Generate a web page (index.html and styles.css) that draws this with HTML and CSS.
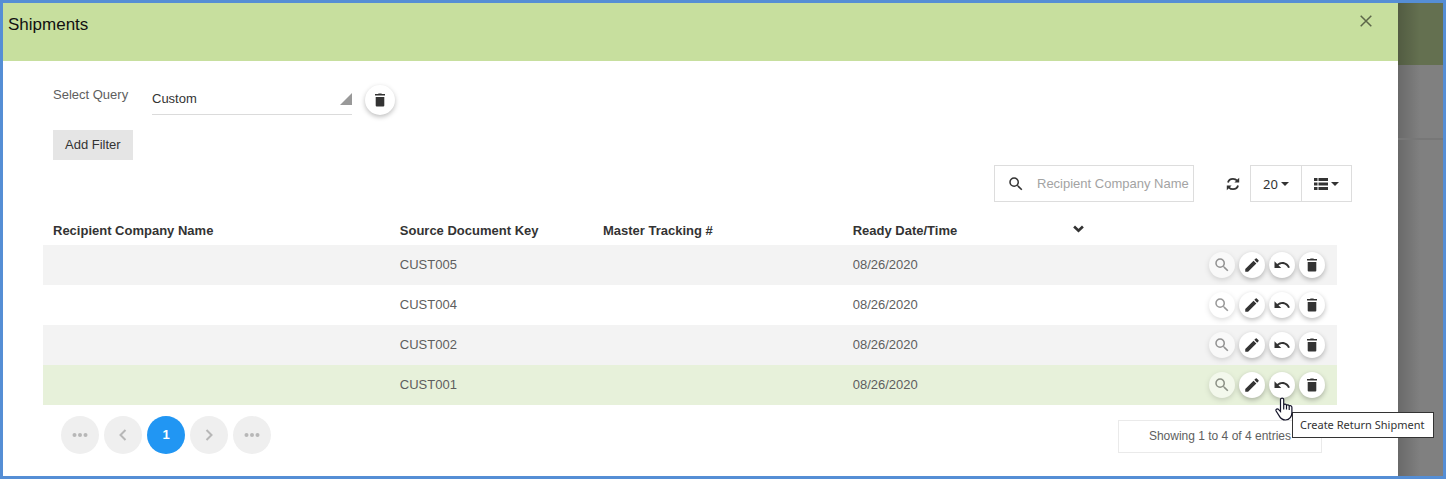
FILE: index.html
```html
<!DOCTYPE html>
<html lang="en">
<head>
<meta charset="utf-8">
<title>Shipments</title>
<link rel="stylesheet" href="styles.css">
</head>
<body>
<svg class="sprite" aria-hidden="true">
  <symbol id="trash" viewBox="0 0 18 18"><path d="M4.700 6h8.600v8.600a1 1 0 0 1-1 1H5.700a1 1 0 0 1-1-1zM7 3.100l.7-.7h2.600l.7.700h3v1.500H4V3.100z"/></symbol>
  <symbol id="search" viewBox="0 0 24 24"><path d="M15.500 14h-.79l-.28-.27A6.470 6.470 0 0 0 16 9.500 6.500 6.500 0 1 0 9.500 16c1.610 0 3.090-.59 4.230-1.570l.27.28v.79l5 4.990L20.490 19l-4.990-5zm-6 0C7.010 14 5 11.990 5 9.500S7.010 5 9.500 5 14 7.010 14 9.500 11.990 14 9.500 14z"/></symbol>
  <symbol id="edit" viewBox="0 0 24 24"><path d="M3 17.250V21h3.750L17.810 9.940l-3.750-3.750L3 17.250zM20.710 7.040a1 1 0 0 0 0-1.410l-2.340-2.340a1 1 0 0 0-1.410 0l-1.830 1.830 3.750 3.750 1.830-1.830z"/></symbol>
  <symbol id="undo" viewBox="0 0 24 24"><path d="M12.500 8c-2.650 0-5.050.99-6.900 2.600L2 7v9h9l-3.620-3.620c1.390-1.160 3.160-1.880 5.120-1.880 3.540 0 6.550 2.310 7.600 5.500l2.370-.78C21.080 11.030 17.150 8 12.500 8z"/></symbol>
</svg>
<div class="frame">
  <main class="panel">
    <header class="panel-head">
      <h1>Shipments</h1>
      <button class="close" type="button" aria-label="Close">
        <svg viewBox="0 0 12 12"><path d="M.7.7l10.600 10.600M11.300.7L.7 11.300"/></svg>
      </button>
    </header>
    <div class="panel-body">
      <div class="query">
        <label for="query">Select Query</label>
        <select id="query"><option>Custom</option></select>
        <button class="round large" type="button" aria-label="Delete query"><svg><use href="#trash"/></svg></button>
      </div>
      <button class="filter" type="button">Add Filter</button>
      <div class="toolbar">
        <div class="search">
          <svg><use href="#search"/></svg>
          <input type="text" aria-label="Search" placeholder="Recipient Company Name">
        </div>
        <button class="refresh" type="button" aria-label="Refresh">
          <svg viewBox="0 0 14 14"><path class="arc" d="M2 5.500C2.600 3 4.600 1.800 7 1.800c1.800 0 3 .6 4.200 1.900M12 8.500c-.6 2.500-2.600 3.700-5 3.700-1.800 0-3-.6-4.200-1.900"/><path d="M13.200.8v4.800H8.400zM.8 13.200V8.400h4.800z"/></svg>
        </button>
        <div class="group">
          <button class="size" type="button">20<span class="caret"></span></button>
          <button type="button" aria-label="Columns">
            <svg viewBox="0 0 14 12"><path d="M0 0h3.500v3H0zM4.500 0H14v3H4.500zM0 4.500h3.500v3H0zM4.500 4.500H14v3H4.500zM0 9h3.500v3H0zM4.500 9H14v3H4.500z"/></svg><span class="caret"></span>
          </button>
        </div>
      </div>
      <table>
        <colgroup><col class="c-name"><col class="c-key"><col class="c-track"><col class="c-date"><col></colgroup>
        <thead>
          <tr>
            <th>Recipient Company Name</th><th>Source Document Key</th><th>Master Tracking #</th>
            <th><div class="sorted">Ready Date/Time<svg viewBox="0 0 10 7"><path d="M1 1.300l4 3.800 4-3.800"/></svg></div></th>
            <th></th>
          </tr>
        </thead>
        <tbody>
          <tr>
            <td></td><td>CUST005</td><td></td><td>08/26/2020</td>
            <td><div class="actions">
              <button class="round" type="button" disabled aria-label="View"><svg><use href="#search"/></svg></button>
              <button class="round" type="button" aria-label="Edit"><svg><use href="#edit"/></svg></button>
              <button class="round" type="button" aria-label="Return"><svg><use href="#undo"/></svg></button>
              <button class="round" type="button" aria-label="Delete"><svg><use href="#trash"/></svg></button>
            </div></td>
          </tr>
          <tr>
            <td></td><td>CUST004</td><td></td><td>08/26/2020</td>
            <td><div class="actions">
              <button class="round" type="button" disabled aria-label="View"><svg><use href="#search"/></svg></button>
              <button class="round" type="button" aria-label="Edit"><svg><use href="#edit"/></svg></button>
              <button class="round" type="button" aria-label="Return"><svg><use href="#undo"/></svg></button>
              <button class="round" type="button" aria-label="Delete"><svg><use href="#trash"/></svg></button>
            </div></td>
          </tr>
          <tr>
            <td></td><td>CUST002</td><td></td><td>08/26/2020</td>
            <td><div class="actions">
              <button class="round" type="button" disabled aria-label="View"><svg><use href="#search"/></svg></button>
              <button class="round" type="button" aria-label="Edit"><svg><use href="#edit"/></svg></button>
              <button class="round" type="button" aria-label="Return"><svg><use href="#undo"/></svg></button>
              <button class="round" type="button" aria-label="Delete"><svg><use href="#trash"/></svg></button>
            </div></td>
          </tr>
          <tr class="active">
            <td></td><td>CUST001</td><td></td><td>08/26/2020</td>
            <td><div class="actions">
              <button class="round" type="button" disabled aria-label="View"><svg><use href="#search"/></svg></button>
              <button class="round" type="button" aria-label="Edit"><svg><use href="#edit"/></svg></button>
              <div class="hovered">
                <button class="round" type="button" aria-describedby="tip" aria-label="Return"><svg><use href="#undo"/></svg></button>
                <span class="tooltip" id="tip" role="tooltip">Create Return Shipment</span>
                <svg class="pointer" viewBox="0 0 18 24"><path d="M5.500 14.500V2.600c0-2.100 3.200-2.100 3.200 0v5.600c.3-1.500 2.700-1.300 2.800.3.500-1.200 2.700-.8 2.700.7.700-1 2.700-.5 2.700 1.200v5.100c0 3.800-2.200 7.500-6.400 7.500-3.200 0-4.900-1.500-6.300-4.100L1.100 14c-.8-1.800 1.400-2.800 2.600-1.400zM8.700 8v4.500M11.500 8.500v4M14.200 9.500v3.500"/></svg>
              </div>
              <button class="round" type="button" aria-label="Delete"><svg><use href="#trash"/></svg></button>
            </div></td>
          </tr>
        </tbody>
      </table>
      <footer class="table-foot">
        <nav class="pages" aria-label="Pages">
          <button type="button" disabled aria-label="First"><svg viewBox="0 0 16 16"><circle cx="2.500" cy="8" r="2"/><circle cx="8" cy="8" r="2"/><circle cx="13.500" cy="8" r="2"/></svg></button>
          <button type="button" disabled aria-label="Previous"><svg viewBox="0 0 16 16"><path d="M10.500 3L5.500 8l5 5"/></svg></button>
          <button type="button" class="current" aria-current="page">1</button>
          <button type="button" disabled aria-label="Next"><svg viewBox="0 0 16 16"><path d="M5.500 3l5 5-5 5"/></svg></button>
          <button type="button" disabled aria-label="Last"><svg viewBox="0 0 16 16"><circle cx="2.500" cy="8" r="2"/><circle cx="8" cy="8" r="2"/><circle cx="13.500" cy="8" r="2"/></svg></button>
        </nav>
        <div class="summary">Showing 1 to 4 of 4 entries</div>
      </footer>
    </div>
  </main>
  <aside class="behind" aria-hidden="true">
    <div class="behind-head"></div>
    <div class="behind-bar"></div>
  </aside>
</div>
</body>
</html>
```
FILE: styles.css
```css
* { box-sizing: border-box; }
body {
  margin: 0;
  font: 13px/20px "Liberation Sans", Arial, sans-serif;
  color: #5e5e5e;
}
button, input, select { font: inherit; color: #333; }
button { border: 0; padding: 0; background: none; }
svg { display: block; fill: currentColor; }
.sprite { position: absolute; width: 0; height: 0; }

.frame {
  display: flex;
  min-height: 100vh;
  border: 3px solid #558ed5;
}
.panel { flex: 1; min-width: 0; background: #fff; }
.panel-head {
  display: flex;
  justify-content: space-between;
  align-items: flex-start;
  height: 58px;
  padding: 12px 26px 0 5px;
  background: #c7df9e;
}
h1 { margin: 0; font-size: 17px; line-height: 20px; font-weight: 400; color: #111; }
.close svg { width: 12px; height: 12px; fill: none; stroke: #5c6649; stroke-width: 1.500; }
.panel-body { padding: 21px 46px 22px 40px; }

.query { display: flex; align-items: flex-start; padding-left: 10px; }
.query label { width: 99px; padding-top: 3px; }
.query select {
  width: 200px;
  height: 33px;
  padding: 2px 0 0;
  border: 0;
  border-bottom: 1px solid #dbdbdb;
  border-radius: 0;
  appearance: none;
  background: url("data:image/svg+xml,%3Csvg xmlns='http://www.w3.org/2000/svg' viewBox='0 0 12 12'%3E%3Cpath fill='%23999' d='M12 0v12H0z'/%3E%3C/svg%3E") right 0 bottom 9px / 12px 12px no-repeat;
}
.round {
  display: flex;
  align-items: center;
  justify-content: center;
  width: 26px;
  height: 26px;
  border-radius: 50%;
  background: #fff;
  color: #333;
  box-shadow: 0 2px 5px rgba(0, 0, 0, .26);
}
.round svg { width: 18px; height: 18px; }
.round:disabled { opacity: .5; }
.round.large { width: 30px; height: 30px; margin: 3px 0 0 13px; }
.filter {
  display: block;
  height: 30px;
  margin: 15px 0 0 10px;
  padding: 0 12px;
  background: #e5e5e5;
}

.toolbar { display: flex; justify-content: flex-end; align-items: center; margin-top: 5px; }
.search {
  display: flex;
  align-items: center;
  width: 200px;
  height: 37px;
  border: 1px solid #ddd;
  padding-left: 12px;
  color: #333;
}
.search svg { flex: none; width: 18px; height: 18px; }
.search input { width: 100%; min-width: 0; padding: 0; margin-left: 12px; border: 0; outline: 0; background: none; }
.search input::placeholder { color: #a3a3a3; opacity: 1; }
.refresh { margin: 0 10px 0 32px; }
.refresh svg { width: 14px; height: 14px; }
.arc { fill: none; stroke: currentColor; stroke-width: 1.800; }
.group { display: flex; border: 1px solid #ddd; }
.group button { display: flex; align-items: center; justify-content: center; gap: 3px; width: 50px; height: 35px; }
.group button + button { border-left: 1px solid #ddd; }
.group .size { font-family: "Noto Sans", "Open Sans", sans-serif; }
.group svg { width: 14px; height: 12px; }
.caret { border: 4px solid transparent; border-top-color: currentColor; border-bottom: 0; }

table {
  width: calc(100% - 15px);
  margin-top: 14px;
  border-collapse: collapse;
  table-layout: fixed;
}
.c-name { width: 26.800%; }
.c-key { width: 15.700%; }
.c-track { width: 19.300%; }
.c-date { width: 19.400%; }
th { height: 29px; padding: 0 10px; text-align: left; color: #333; }
td { height: 40px; padding: 0 10px; }
tbody tr:nth-child(odd) { background: #f3f3f3; }
tbody tr.active { background: #e7f1da; }
.sorted { display: flex; justify-content: space-between; align-items: center; }
.sorted svg { width: 11px; height: 8px; margin-bottom: 4px; fill: none; stroke: currentColor; stroke-width: 2.400; }
.actions { display: flex; justify-content: flex-end; gap: 4px; padding-right: 2px; }
.hovered { position: relative; }
.tooltip {
  position: absolute;
  left: 23px;
  top: 40px;
  z-index: 1;
  padding: 3px 9px 3px 7px;
  border: 1px solid #333;
  background: #fff;
  color: #333;
  font: 11px/18px "Noto Sans", "Open Sans", sans-serif;
  white-space: nowrap;
}
.pointer {
  position: absolute;
  left: 6px;
  top: 25px;
  z-index: 2;
  width: 18px;
  height: 24px;
  fill: #fff;
  stroke: #15152a;
  stroke-width: 1.200;
}

.table-foot { display: flex; justify-content: space-between; align-items: center; padding: 11px 30px 0 18px; }
.pages { display: flex; gap: 5px; }
.pages button {
  display: flex;
  align-items: center;
  justify-content: center;
  width: 38px;
  height: 38px;
  border-radius: 50%;
  background: #efefef;
  color: #b7b7b7;
}
.pages svg { width: 16px; height: 16px; }
.pages path { fill: none; stroke: currentColor; stroke-width: 2; }
.pages .current { background: #2196f3; color: #fff; font-weight: 700; }
.summary { margin-top: 2px; padding: 5px 30px 6px; border: 1px solid #eaeaea; font-size: 12px; }

.behind {
  width: 45px;
  background: linear-gradient(90deg, rgba(0, 0, 0, .18), transparent 22px), #808080;
}
.behind-head { height: 62px; background: linear-gradient(90deg, rgba(0, 0, 0, .18), transparent 22px), #647050; }
.behind-bar { height: 75px; border-bottom: 2px solid #777; }
```
